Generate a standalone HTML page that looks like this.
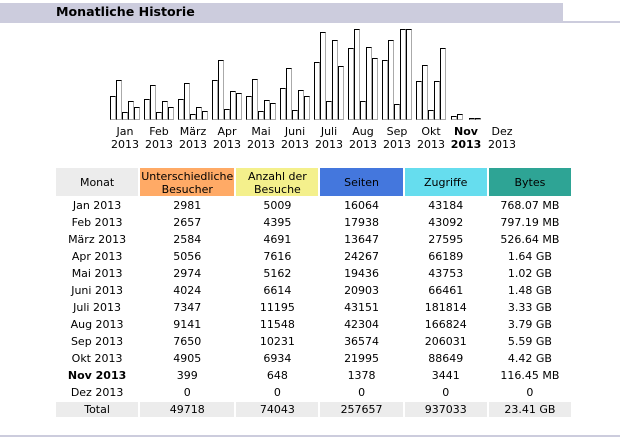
<!DOCTYPE html>
<html><head><meta charset="utf-8">
<style>
html,body{margin:0;padding:0;background:#fff;width:620px;height:447px;overflow:hidden}
body{font-family:"DejaVu Sans","Liberation Sans",sans-serif;font-size:11px;color:#000;position:relative}
.a{position:absolute}
.b{position:absolute;box-sizing:border-box;width:6px;border-left:1px solid #000;border-top:1px solid #000;border-right:1px solid #aaa;border-bottom:1px solid #aaa;background:#fff}
.l{position:absolute;width:34px;text-align:center;line-height:13px;top:125px;font-size:11px;white-space:nowrap}
table{position:absolute;left:54px;top:166px;border-collapse:separate;border-spacing:2px;table-layout:fixed;width:519px;font-size:11px}
td{padding:1px 0 0;text-align:center;height:14px;line-height:14px;white-space:nowrap}
tr{height:15px}
.h td{height:27px;line-height:13px;white-space:normal}
.t td{background:#ececec}
</style></head><body>
<div class="a" style="left:0;top:3px;width:563px;height:18px;background:#ccd"></div>
<div class="a" style="left:0;top:21px;width:620px;height:2px;background:#ccd"></div>
<div class="a" style="left:56px;top:3px;font-weight:bold;font-size:12.6px;line-height:17px;white-space:nowrap">Monatliche Historie</div>

<div class="b" style="left:110px;top:96px;height:24px"></div><div class="b" style="left:116px;top:80px;height:40px"></div><div class="b" style="left:122px;top:112px;height:8px"></div><div class="b" style="left:128px;top:101px;height:19px"></div><div class="b" style="left:134px;top:107px;height:13px"></div>
<div class="b" style="left:144px;top:99px;height:21px"></div><div class="b" style="left:150px;top:85px;height:35px"></div><div class="b" style="left:156px;top:112px;height:8px"></div><div class="b" style="left:162px;top:101px;height:19px"></div><div class="b" style="left:168px;top:107px;height:13px"></div>
<div class="b" style="left:178px;top:99px;height:21px"></div><div class="b" style="left:184px;top:83px;height:37px"></div><div class="b" style="left:190px;top:114px;height:6px"></div><div class="b" style="left:196px;top:107px;height:13px"></div><div class="b" style="left:202px;top:111px;height:9px"></div>
<div class="b" style="left:212px;top:80px;height:40px"></div><div class="b" style="left:218px;top:60px;height:60px"></div><div class="b" style="left:224px;top:109px;height:11px"></div><div class="b" style="left:230px;top:91px;height:29px"></div><div class="b" style="left:236px;top:93px;height:27px"></div>
<div class="b" style="left:246px;top:96px;height:24px"></div><div class="b" style="left:252px;top:79px;height:41px"></div><div class="b" style="left:258px;top:111px;height:9px"></div><div class="b" style="left:264px;top:100px;height:20px"></div><div class="b" style="left:270px;top:103px;height:17px"></div>
<div class="b" style="left:280px;top:88px;height:32px"></div><div class="b" style="left:286px;top:68px;height:52px"></div><div class="b" style="left:292px;top:110px;height:10px"></div><div class="b" style="left:298px;top:90px;height:30px"></div><div class="b" style="left:304px;top:96px;height:24px"></div>
<div class="b" style="left:314px;top:62px;height:58px"></div><div class="b" style="left:320px;top:32px;height:88px"></div><div class="b" style="left:326px;top:101px;height:19px"></div><div class="b" style="left:332px;top:40px;height:80px"></div><div class="b" style="left:338px;top:66px;height:54px"></div>
<div class="b" style="left:348px;top:48px;height:72px"></div><div class="b" style="left:354px;top:29px;height:91px"></div><div class="b" style="left:360px;top:101px;height:19px"></div><div class="b" style="left:366px;top:47px;height:73px"></div><div class="b" style="left:372px;top:58px;height:62px"></div>
<div class="b" style="left:382px;top:60px;height:60px"></div><div class="b" style="left:388px;top:40px;height:80px"></div><div class="b" style="left:394px;top:104px;height:16px"></div><div class="b" style="left:400px;top:29px;height:91px"></div><div class="b" style="left:406px;top:29px;height:91px"></div>
<div class="b" style="left:416px;top:81px;height:39px"></div><div class="b" style="left:422px;top:65px;height:55px"></div><div class="b" style="left:428px;top:110px;height:10px"></div><div class="b" style="left:434px;top:81px;height:39px"></div><div class="b" style="left:440px;top:48px;height:72px"></div>
<div class="b" style="left:451px;top:116px;height:4px"></div><div class="b" style="left:457px;top:114px;height:6px"></div>
<div class="b" style="left:469px;top:118px;height:2px"></div><div class="b" style="left:475px;top:118px;height:2px"></div>

<div class="l" style="left:108px">Jan<br>2013</div>
<div class="l" style="left:142px">Feb<br>2013</div>
<div class="l" style="left:176px">März<br>2013</div>
<div class="l" style="left:210px">Apr<br>2013</div>
<div class="l" style="left:244px">Mai<br>2013</div>
<div class="l" style="left:278px">Juni<br>2013</div>
<div class="l" style="left:312px">Juli<br>2013</div>
<div class="l" style="left:346px">Aug<br>2013</div>
<div class="l" style="left:380px">Sep<br>2013</div>
<div class="l" style="left:414px">Okt<br>2013</div>
<div class="l" style="left:449px;font-weight:bold">Nov<br>2013</div>
<div class="l" style="left:485px">Dez<br>2013</div>

<table>
<colgroup><col style="width:82px"><col style="width:94px"><col style="width:82px"><col style="width:82px"><col style="width:82px"><col style="width:82px"></colgroup>
<tr class="h"><td style="background:#ececec">Monat</td><td style="background:#ffaa66">Unterschiedliche Besucher</td><td style="background:#f4f08c">Anzahl der Besuche</td><td style="background:#4477dd">Seiten</td><td style="background:#66ddee">Zugriffe</td><td style="background:#2ea495">Bytes</td></tr>
<tr><td>Jan 2013</td><td>2981</td><td>5009</td><td>16064</td><td>43184</td><td>768.07 MB</td></tr>
<tr><td>Feb 2013</td><td>2657</td><td>4395</td><td>17938</td><td>43092</td><td>797.19 MB</td></tr>
<tr><td>März 2013</td><td>2584</td><td>4691</td><td>13647</td><td>27595</td><td>526.64 MB</td></tr>
<tr><td>Apr 2013</td><td>5056</td><td>7616</td><td>24267</td><td>66189</td><td>1.64 GB</td></tr>
<tr><td>Mai 2013</td><td>2974</td><td>5162</td><td>19436</td><td>43753</td><td>1.02 GB</td></tr>
<tr><td>Juni 2013</td><td>4024</td><td>6614</td><td>20903</td><td>66461</td><td>1.48 GB</td></tr>
<tr><td>Juli 2013</td><td>7347</td><td>11195</td><td>43151</td><td>181814</td><td>3.33 GB</td></tr>
<tr><td>Aug 2013</td><td>9141</td><td>11548</td><td>42304</td><td>166824</td><td>3.79 GB</td></tr>
<tr><td>Sep 2013</td><td>7650</td><td>10231</td><td>36574</td><td>206031</td><td>5.59 GB</td></tr>
<tr><td>Okt 2013</td><td>4905</td><td>6934</td><td>21995</td><td>88649</td><td>4.42 GB</td></tr>
<tr><td><b>Nov 2013</b></td><td>399</td><td>648</td><td>1378</td><td>3441</td><td>116.45 MB</td></tr>
<tr><td>Dez 2013</td><td>0</td><td>0</td><td>0</td><td>0</td><td>0</td></tr>
<tr class="t"><td>Total</td><td>49718</td><td>74043</td><td>257657</td><td>937033</td><td>23.41 GB</td></tr>
</table>
<div class="a" style="left:0;top:435px;width:620px;height:2px;background:#ccd"></div>
</body></html>
